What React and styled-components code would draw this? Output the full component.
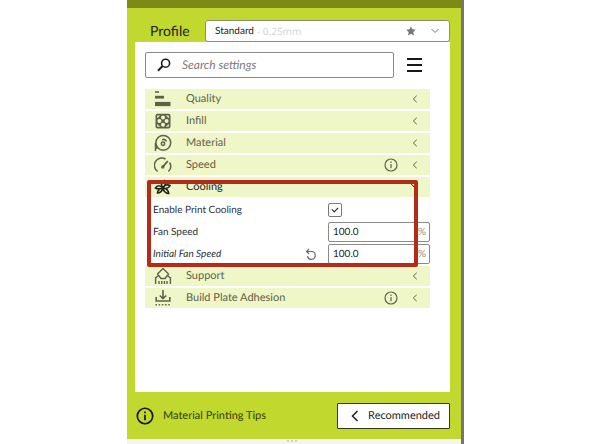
import React, { useState } from "react";
import styled, { createGlobalStyle, css } from "styled-components";

const GlobalStyle = createGlobalStyle`
  * {
    box-sizing: border-box;
  }
  body {
    margin: 0;
    background: #ffffff;
    font-family: Lato, "Liberation Sans", sans-serif;
    color: #1c1f24;
    text-rendering: geometricPrecision;
  }
  button,
  input {
    font-family: inherit;
    color: inherit;
    text-rendering: inherit;
  }
`;

const Page = styled.div`
  min-height: 100vh;
  display: flex;
  padding: 0 128px 0 127px;
`;

const Panel = styled.main`
  flex: 1;
  min-width: 0;
  display: flex;
  flex-direction: column;
  background: #c1d82f;
  border-right: 3px solid #75776c;
`;

const TopBar = styled.div`
  height: 8px;
  background: #7d8a16;
`;

const Body = styled.div`
  flex: 1;
  display: flex;
  flex-direction: column;
  padding: 12px 11px 0 8px;
`;

const ProfileRow = styled.div`
  display: flex;
  align-items: center;
`;

const ProfileLabel = styled.label`
  width: 70px;
  padding-left: 15px;
  font-size: 14px;
  line-height: 22px;
`;

const ProfileSelect = styled.button`
  flex: 1;
  height: 22px;
  display: flex;
  align-items: center;
  gap: 3px;
  padding: 0 10px 0 9px;
  background: #ffffff;
  border: 1px solid #8c9073;
  border-radius: 3px;
  font-size: 10px;
  line-height: 16px;
  text-align: left;
`;

const Muted = styled.span`
  flex: 1;
  color: #d5d5d5;
  font-family: "Noto Sans", sans-serif;
`;

const Card = styled.section`
  flex: 1;
  background: #ffffff;
  padding: 10px 20px 0 10px;
`;

const SearchRow = styled.div`
  display: flex;
  align-items: center;
  gap: 13px;
  padding-right: 8px;
  margin-bottom: 11px;
`;

const SearchBox = styled.label`
  flex: 1;
  height: 26px;
  display: flex;
  align-items: center;
  gap: 11px;
  padding-left: 11px;
  border: 1px solid #8a8a8a;
  border-radius: 2px;
`;

const SearchInput = styled.input`
  flex: 1;
  min-width: 0;
  padding: 0;
  border: 0;
  outline: 0;
  background: transparent;
  font-size: 12px;
  line-height: 16px;
  font-style: italic;
  &::placeholder {
    color: #7b7b7b;
    opacity: 1;
  }
`;

const IconButton = styled.button`
  display: flex;
  padding: 0;
  border: 0;
  background: none;
  color: ${(props) => props.$color || "#15181c"};
`;

const List = styled.div`
  display: flex;
  flex-direction: column;
  gap: 2px;
`;

const CategoryButton = styled.button`
  width: 100%;
  height: 20px;
  display: flex;
  align-items: center;
  padding: 0 12px 0 9px;
  border: 0;
  background: #eff6c7;
  color: ${(props) => (props.$open ? "#24261c" : "#5f624a")};
  font-size: 11px;
  line-height: 20px;
  text-align: left;
`;

const CategoryName = styled.span`
  flex: 1;
  padding-left: 14px;
`;

const InfoSlot = styled.span`
  display: flex;
  margin-right: 14px;
`;

const Highlighted = styled.div`
  position: relative;
`;

// red frame laid over the cooling settings
const RedFrame = styled.div`
  position: absolute;
  inset: 3px 12px -3px 2px;
  border: 4px solid #b62a18;
  border-radius: 2px;
  pointer-events: none;
`;

const Settings = styled.div`
  display: flex;
  flex-direction: column;
  gap: 2px;
  padding: 3px 0 0 8px;
`;

const SettingRow = styled.div`
  height: 20px;
  display: flex;
  align-items: center;
`;

const SettingLabel = styled.label`
  flex: 1;
  font-size: 10px;
  line-height: 20px;
  color: #2e3035;
  ${(props) =>
    props.$changed &&
    css`
      font-style: italic;
    `}
`;

const Control = styled.div`
  width: 102px;
  height: 20px;
  margin-left: 11px;
  display: flex;
  align-items: center;
`;

const Field = styled.span`
  width: 100%;
  height: 20px;
  display: flex;
  align-items: center;
  padding: 0 3px 0 4px;
  border: 1px solid #8a8a8a;
  border-radius: 2px;
  background: #ffffff;
  color: #8a8a8a;
  font-size: 10px;
`;

const NumberInput = styled.input`
  flex: 1;
  min-width: 0;
  padding: 0;
  border: 0;
  outline: 0;
  background: transparent;
  color: #1c1f24;
  font-size: 10px;
  line-height: 16px;
`;

const Checkbox = styled.input`
  appearance: none;
  width: 14px;
  height: 14px;
  margin: 0;
  display: grid;
  place-items: center;
  border: 1px solid #77777c;
  border-radius: 2px;
  &:checked::before {
    content: "";
    width: 5px;
    height: 3px;
    margin-bottom: 2px;
    border-left: 1px solid #222222;
    border-bottom: 1px solid #222222;
    transform: rotate(-45deg);
  }
`;

const Footer = styled.footer`
  display: flex;
  align-items: center;
  justify-content: space-between;
  padding: 11px 0 10px 1px;
`;

const TipsLink = styled.a`
  display: flex;
  align-items: center;
  gap: 9px;
  color: #353b0c;
  font-size: 11px;
  line-height: 16px;
  text-decoration: none;
  svg {
    color: #14160a;
  }
`;

const RecommendedButton = styled.button`
  width: 113px;
  height: 26px;
  display: flex;
  align-items: center;
  justify-content: space-between;
  padding: 0 9px 0 13px;
  background: #ffffff;
  border: 1px solid #33381a;
  border-radius: 1px;
  font-size: 11px;
  line-height: 16px;
`;

const BottomEdge = styled.div`
  height: 5px;
  display: flex;
  justify-content: center;
  gap: 2px;
  padding: 1px 4px 0 0;
  background: #f4f5f0;
`;

const Dot = styled.span`
  width: 2px;
  height: 2px;
  border-radius: 50%;
  background: #c4c4c4;
`;

const Svg = ({ size = 18, width, height, stroke = 1.4, children }) => (
  <svg
    width={width || size}
    height={height || size}
    viewBox={`0 0 ${width || size} ${height || size}`}
    fill="none"
    stroke="currentColor"
    strokeWidth={stroke}
    aria-hidden="true"
  >
    {children}
  </svg>
);

const QualityIcon = () => (
  <Svg>
    <path d="M1 2h4" strokeWidth="1.6" />
    <path d="M1 7.2h9" strokeWidth="2.8" />
    <path d="M1 14h15.5" strokeWidth="4.2" />
  </Svg>
);

const InfillIcon = () => (
  <Svg>
    <rect
      x="1.5"
      y="1.8"
      width="15"
      height="14.6"
      rx="2"
      fill="currentColor"
      stroke="none"
    />
    <g fill="#eff6c7" stroke="none">
      <circle cx="9" cy="5.5" r="2" />
      <circle cx="5.400" cy="9.1" r="2" />
      <circle cx="12.600" cy="9.1" r="2" />
      <circle cx="9" cy="12.700" r="2" />
      <path d="M3.2 6.300V3.500h2.900zM14.800 6.300V3.500h-2.900zM3.200 11.900v2.800h2.900zM14.800 11.900v2.800h-2.900z" />
    </g>
  </Svg>
);

const MaterialIcon = () => (
  <Svg stroke={1.5}>
    <circle cx="9.300" cy="8.800" r="7.400" />
    <path d="M1.500 17V9M1.500 12.500l2 2" />
    <circle cx="9" cy="9.700" r="1.700" />
    <path d="M8.200 5.700c1.800-.7 3.600.1 4.300 1.900" />
  </Svg>
);

const SpeedIcon = () => (
  <Svg stroke={1.5}>
    <path d="M3.6 15.5A7.4 7.4 0 0 1 11.5 3M15.6 6.500a7.4 7.4 0 0 1-1.200 9" />
    <path d="M8.600 11.200L13.800 5" strokeWidth="1.8" />
    <circle cx="8.800" cy="11" r="1" fill="currentColor" />
  </Svg>
);

const CoolingIcon = () => (
  <Svg stroke={1.7}>
    <path d="M9 10C6.500 7 7 3 10.500 2.500 12 5 11 8 9 10zM9 10c1-3 4.500-4 7-2.500-1 2.500-4 3.500-7 2.500zM9 10c3 0 5.500 2.500 5.700 5.500C12 15.500 9.500 13 9 10zM9 10c-1 3-3 5-5.500 5C3.500 12.500 6 10 9 10zM9 10C6 11 3.500 11.500 1.500 10c1.500-3 5-3 7.500 0z" />
  </Svg>
);

const SupportIcon = () => (
  <Svg>
    <path d="M9 1.500L14.500 7 11 11.500H7L3.500 7z" strokeLinejoin="round" />
    <path d="M1.600 10v7M5 14v3M7.700 14v3M10.400 14v3M13 14v3M16.400 10v7M1.600 11l3-2.500M16.400 11l-3-2.500" />
  </Svg>
);

const AdhesionIcon = () => (
  <Svg stroke={1.6}>
    <path d="M9 1v8.500M5.800 6.500L9 9.700l3.200-3.200M2.200 8v4h13.600V8" />
    <path d="M1.500 15.700h15" strokeDasharray="1.500 1.700" />
  </Svg>
);

const InfoIcon = ({ size = 14, stroke = 1.2 }) => (
  <svg
    width={size}
    height={size}
    viewBox="0 0 14 14"
    fill="none"
    stroke="currentColor"
    strokeWidth={stroke}
    aria-hidden="true"
  >
    <circle cx="7" cy="7" r="6" />
    <path d="M7 6v4.300M7 3.500v1.400" />
  </svg>
);

const ChevronLeft = () => (
  <Svg width={6} height={8} stroke={1}>
    <path d="M4.700.8L1.300 4l3.400 3.200" />
  </Svg>
);

const ResetIcon = () => (
  <Svg size={12} stroke={1.2}>
    <path d="M1.500 3.500H6.500a3.900 3.900 0 1 1-4 4.600M4.200.8L1.500 3.500l2.700 2.700" />
  </Svg>
);

const categoriesBefore = [
  { name: "Quality", Icon: QualityIcon },
  { name: "Infill", Icon: InfillIcon },
  { name: "Material", Icon: MaterialIcon },
  { name: "Speed", Icon: SpeedIcon, info: true },
];

const categoriesAfter = [
  { name: "Support", Icon: SupportIcon },
  { name: "Build Plate Adhesion", Icon: AdhesionIcon, info: true },
];

function Category({ name, Icon, info, open }) {
  return (
    <CategoryButton type="button" $open={open} aria-expanded={!!open}>
      <Icon />
      <CategoryName>{name}</CategoryName>
      {info && (
        <InfoSlot>
          <InfoIcon />
        </InfoSlot>
      )}
      {open ? (
        <Svg width={8} height={8} stroke={1}>
          <path d="M.8.500L4 4 7.200.500" />
        </Svg>
      ) : (
        <ChevronLeft />
      )}
    </CategoryButton>
  );
}

function SpeedSetting({ id, label, changed }) {
  const [value, setValue] = useState("100.0");

  return (
    <SettingRow>
      <SettingLabel htmlFor={id} $changed={changed}>
        {label}
      </SettingLabel>
      {changed && (
        <IconButton
          type="button"
          aria-label="Reset"
          $color="#66666a"
          onClick={() => setValue("100.0")}
        >
          <ResetIcon />
        </IconButton>
      )}
      <Control>
        <Field>
          <NumberInput
            id={id}
            value={value}
            onChange={(e) => setValue(e.target.value)}
          />
          %
        </Field>
      </Control>
    </SettingRow>
  );
}

export default function App() {
  const [cooling, setCooling] = useState(true);

  return (
    <Page>
      <GlobalStyle />
      <Panel>
        <TopBar />
        <Body>
          <ProfileRow>
            <ProfileLabel htmlFor="profile">Profile</ProfileLabel>
            <ProfileSelect id="profile" type="button">
              <span>Standard</span>
              <Muted>- 0.25mm</Muted>
              <Svg size={10} stroke={0}>
                <path
                  fill="#777777"
                  d="M5 .2l1.4 3.100 3.400.4-2.500 2.300.7 3.500-3-1.700-3 1.700.7-3.500L.2 3.700l3.400-.4z"
                />
              </Svg>
              <Svg width={20} height={8} stroke={1}>
                <path d="M12.500 2l3.500 3.500L19.500 2" stroke="#777777" />
              </Svg>
            </ProfileSelect>
          </ProfileRow>
          <Card>
            <SearchRow>
              <SearchBox>
                <Svg size={14} stroke={1.6}>
                  <circle cx="8.6" cy="5.2" r="4" />
                  <path d="M5.6 8L1 12.8" strokeWidth="2" />
                </Svg>
                <SearchInput
                  aria-label="Search settings"
                  placeholder="Search settings"
                />
              </SearchBox>
              <IconButton type="button" aria-label="Menu">
                <Svg width={15} height={14} stroke={2}>
                  <path d="M0 1h15M0 7h15M0 13h15" />
                </Svg>
              </IconButton>
            </SearchRow>
            <List>
              {categoriesBefore.map((item) => (
                <Category key={item.name} {...item} />
              ))}
              <Highlighted>
                <Category name="Cooling" Icon={CoolingIcon} open />
                <Settings>
                  <SettingRow>
                    <SettingLabel htmlFor="enable-cooling">
                      Enable Print Cooling
                    </SettingLabel>
                    <Control>
                      <Checkbox
                        id="enable-cooling"
                        type="checkbox"
                        checked={cooling}
                        onChange={(e) => setCooling(e.target.checked)}
                      />
                    </Control>
                  </SettingRow>
                  <SpeedSetting id="fan-speed" label="Fan Speed" />
                  <SpeedSetting
                    id="initial-fan-speed"
                    label="Initial Fan Speed"
                    changed
                  />
                </Settings>
                <RedFrame />
              </Highlighted>
              {categoriesAfter.map((item) => (
                <Category key={item.name} {...item} />
              ))}
            </List>
          </Card>
          <Footer>
            <TipsLink href="#tips">
              <InfoIcon size={18} stroke={1.3} />
              Material Printing Tips
            </TipsLink>
            <RecommendedButton type="button">
              <Svg width={8} height={12} stroke={1.5}>
                <path d="M6.5 1L1.5 6l5 5" />
              </Svg>
              Recommended
            </RecommendedButton>
          </Footer>
        </Body>
        <BottomEdge>
          <Dot />
          <Dot />
          <Dot />
        </BottomEdge>
      </Panel>
    </Page>
  );
}
